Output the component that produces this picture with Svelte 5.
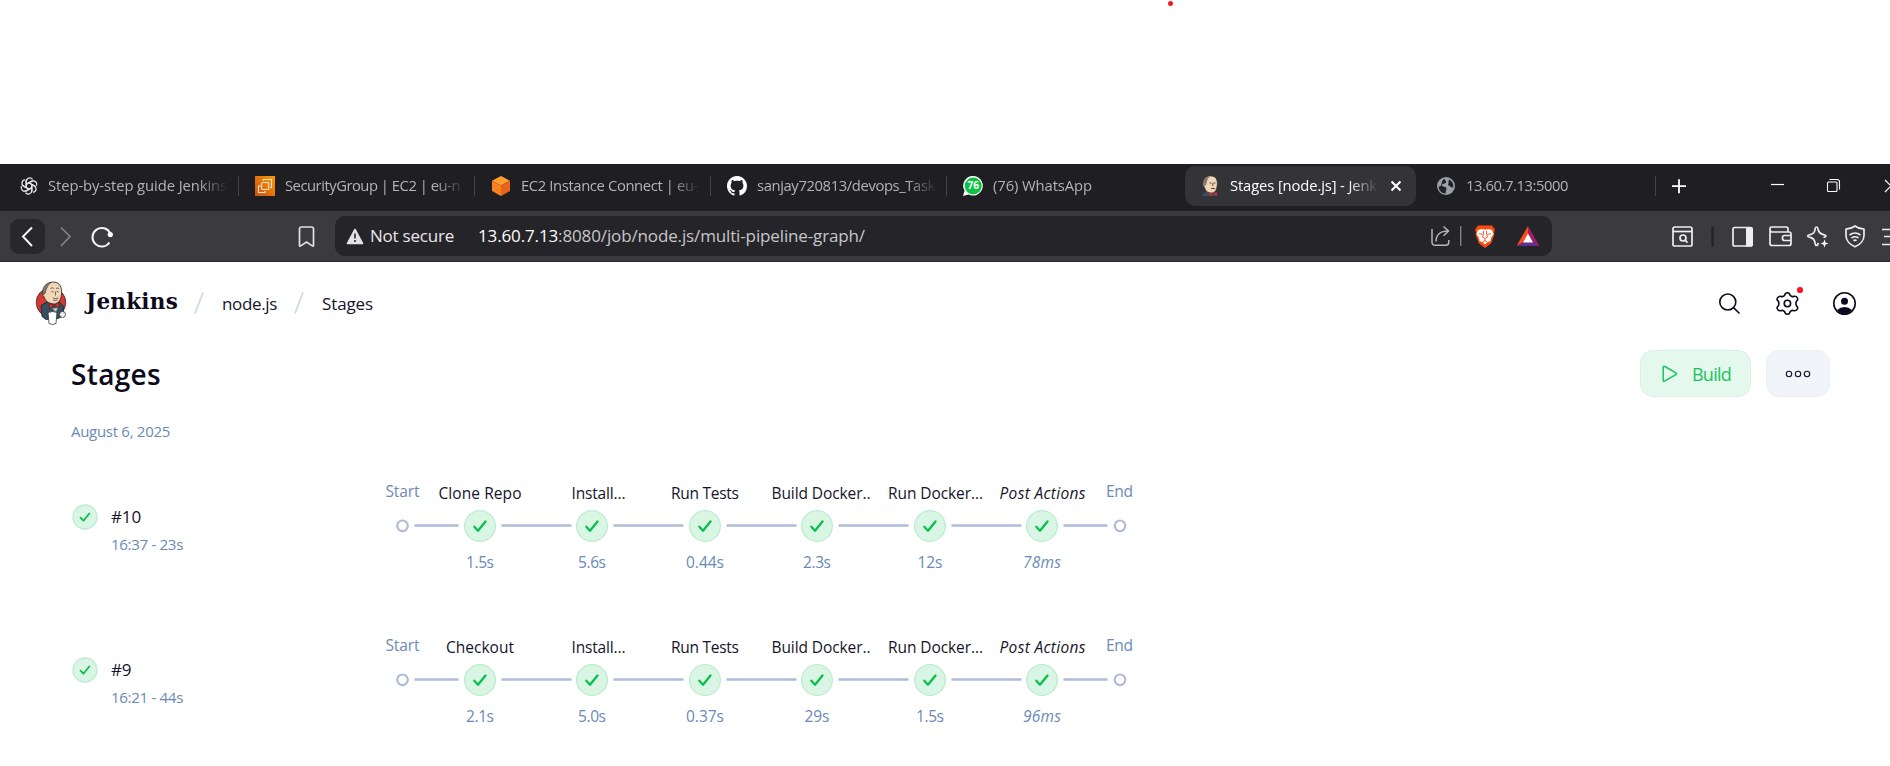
<script>
  // Spreads a label's letters so that it fills the given width.
  function fit(el, width) {
    const natural = el.getBoundingClientRect().width;
    el.style.letterSpacing = (width - natural) / el.textContent.length + 'px';
  }

  const tabs = [
    { icon: 'gpt', text: 'Step-by-step guide Jenkins', w: 179 },
    { icon: 'sg', text: 'SecurityGroup | EC2 | eu-n', w: 175 },
    { icon: 'ec2', text: 'EC2 Instance Connect | eu-', w: 177 },
    { icon: 'github', text: 'sanjay720813/devops_Task', w: 178 },
    { icon: 'wa', text: '(76) WhatsApp', w: 99 },
    { icon: 'jenkins', text: 'Stages [node.js] - Jenk', w: 147, active: true },
    { icon: 'globe', text: '13.60.7.13:5000', w: 102 }
  ];

  const xs = [480, 592, 705, 817, 930, 1042];
  const common = [
    { name: 'Install...', w: 54, cx: 598.5 },
    { name: 'Run Tests', w: 68 },
    { name: 'Build Docker..', w: 99, cx: 821 },
    { name: 'Run Docker...', w: 95, cx: 935.5 },
    { name: 'Post Actions', w: 86, cx: 1042.5, it: true }
  ];
  const runs = [
    { id: '#10', iw: 30, time: '16:37 - 23s', stages: [{ name: 'Clone Repo', w: 83 }, ...common],
      took: [['1.5s', 28], ['5.6s', 28], ['0.44s', 38], ['2.3s', 28], ['12s', 25], ['78ms', 38]] },
    { id: '#9', iw: 20, time: '16:21 - 44s', stages: [{ name: 'Checkout', w: 68 }, ...common],
      took: [['2.1s', 28], ['5.0s', 28], ['0.37s', 38], ['29s', 25], ['1.5s', 28], ['96ms', 38]] }
  ];
</script>

{#snippet butler()}
  <circle cx="15" cy="21" r="14.8" fill="#d33833" stroke="#3a1512" stroke-width=".7" />
  <path d="M5 24 10 21 23 20 27 24 28 34 22 37 10 38 6 35Z" fill="#335061" stroke="#172229" stroke-width=".8" />
  <path d="M8 10C9 2 14 .5 18 .6 24 1 26 6 25.5 12 25.3 18 23 22 18 22.5 12 22 9 19 8 15 6 15 6 10 8 10Z" fill="#f0d6b7" stroke="#352e2a" stroke-width=".9" />
  <path d="M7.500 13C5 9 8 2 15 .8 11.500 3.500 11.300 6 10 8L9 12Z" fill="#847b73" stroke="#403b38" stroke-width=".7" />
  <path d="M14.500 7q1.800-1.500 3.200 0M20 7q1.500-1 3 0M15.500 10.200h2M20.500 10.200h2M19.500 10v4M17 16.500q3 1.500 5.500 0M17 18.500q2.500 1 4.500 0" fill="none" stroke="#59483c" stroke-width=".8" />
  <path d="M13.500 22 18 24 13.500 27Z M18 24 23 21 23 26Z" fill="#d33833" stroke="#81110f" stroke-width=".7" />
  <path d="M16 27 22 26 20 31Z" fill="#c9c8cb" stroke="#555" stroke-width=".6" />
  <path d="M12 31q5-2 9 0l-1 11q-3.500 2-7 0Z" fill="#fff" stroke="#33363c" stroke-width=".8" />
  <circle cx="26.500" cy="33" r="3" fill="#efeeee" stroke="#33363c" stroke-width=".8" />
{/snippet}

{#snippet tabIcon(kind)}
  <svg class="fav" viewBox="0 0 20 20">
    {#if kind === 'gpt'}
      <g fill="none" stroke="#e6e6e6" stroke-width="1.300" stroke-linejoin="round">
        {#each [0, 60, 120, 180, 240, 300] as a}
          <path transform="rotate({a} 10 10)" d="M7.200 11.700V5.200A3.600 3.600 0 0 1 13.600 3.300M7.200 8.400 12.600 5.200A3.600 3.600 0 0 1 14.400 4.800" />
        {/each}
      </g>
    {:else if kind === 'sg'}
      <defs><linearGradient id="o" x1="0" y1="1" x2="1" y2="0"><stop stop-color="#c8511b" /><stop offset="1" stop-color="#f90" /></linearGradient></defs>
      <path fill="url(#o)" d="M0 0h20v20H0z" />
      <g fill="none" stroke="#ffe7c8" stroke-width="1.100"><rect x="6.700" y="6.500" width="7" height="7" rx="1" /><path d="M8.500 5V3.500h8v8H15M6 10H3.500v6.500H10V15" /></g>
    {:else if kind === 'ec2'}
      <path fill="#ff9d2e" d="m10 0 9 4.800-9 4.700-9-4.700z" /><path fill="#f58220" d="m1 4.800 9 4.700V20l-9-4.900z" /><path fill="#e8641b" d="m19 4.800-9 4.700V20l9-4.900z" />
    {:else if kind === 'github'}
      <path transform="scale(1.25)" fill="#fff" d="M8 0C3.58 0 0 3.58 0 8c0 3.54 2.29 6.53 5.47 7.59.4.07.55-.17.55-.38 0-.19-.01-.82-.01-1.49-2.01.37-2.53-.49-2.69-.94-.09-.23-.48-.94-.82-1.13-.28-.15-.68-.52-.01-.53.63-.01 1.08.58 1.23.82.72 1.21 1.87.87 2.33.66.07-.52.28-.87.51-1.07-1.78-.2-3.64-.89-3.64-3.95 0-.87.31-1.59.82-2.15-.08-.2-.36-1.02.08-2.12 0 0 .67-.21 2.2.82.64-.18 1.32-.27 2-.27s1.36.09 2 .27c1.53-1.04 2.2-.82 2.2-.82.44 1.1.16 1.92.08 2.12.51.56.82 1.27.82 2.15 0 3.07-1.87 3.75-3.65 3.95.29.25.54.73.54 1.48 0 1.07-.01 1.93-.01 2.2 0 .21.15.46.55.38A8.01 8.01 0 0 0 16 8c0-4.42-3.58-8-8-8z" />
    {:else if kind === 'wa'}
      <path fill="#fff" d="M10.200 0A9.800 9.800 0 1 1 5.500 18.500L0 20l1.600-5.200A9.800 9.800 0 0 1 10.200 0Z" />
      <circle cx="10.200" cy="9.900" r="8.500" fill="#0cc143" />
      <text x="10.200" y="13.400" text-anchor="middle" font-size="10" font-weight="700" fill="#fff">76</text>
    {:else if kind === 'jenkins'}
      <path d="M2 20q0-3 4-4l9-1 3 5Z" fill="#335061" />
      <path d="M4 6C4 1 8 0 11 0c5 0 6.500 4 6.300 8C17 14 15 17 11.500 17 7 17 5 14 4.500 11 2.500 10 2.500 7 4 6Z" fill="#f0d6b7" stroke="#352e2a" stroke-width=".7" />
      <path d="M4 10C2 5 4 1 10 .2 7 3 7.500 5 6 9Z" fill="#847b73" />
      <path d="M9.500 7h2M13.500 7h2M12.800 7v3M11 12.500h4" stroke="#59483c" stroke-width="1" />
      <path d="M9 16l4 2-4 2ZM13 18l4-2v4Z" fill="#e2231f" />
    {:else}
      <circle cx="10" cy="10" r="9" fill="#9aa0a6" />
      <path fill="#202124" d="M8.500 2.500c-.5 2 2.500 2 1.500 4-1.500 2-4 .5-4 3 1 2 4 .5 4.500 3 0 2-1.500 3-.5 5C5 17.500 2.700 14 2.700 10.500c2 .5 2.500-1 2.800-2.500.5-2.500 1-4.500 3-5.500ZM13 3.500c-1 1.500.5 3-1 4.500 0 2 2 1.500 3 3 .5 1 1.500.5 2.300 0C17.600 7.500 16 4.700 13 3.500Z" />
    {/if}
  </svg>
{/snippet}

{#snippet status(r, cx, cy)}
  <circle {cx} {cy} r={r - 0.6} fill="#d9f5e4" stroke="#bdedd0" stroke-width="1.3" />
  <path transform="translate({cx} {cy}) scale({r / 16})" d="m-5.700.8 3.700 3.900 7.500-9.200" fill="none" stroke="#09bf4d" stroke-width="2.300" stroke-linecap="round" stroke-linejoin="round" />
{/snippet}

<div class="page">
  <div class="blank"><i class="speck"></i></div>

  <div class="tabs">
    {#each tabs as t, i}
      <div class="tab" class:active={t.active} class:bar={i !== 4 && i !== 5}>
        {@render tabIcon(t.icon)}
        <div class="clip"><span use:fit={t.w}>{t.text}</span></div>
        {#if t.active}
          <svg class="x" viewBox="0 0 12 12"><path d="m1.500 1.500 9 9m0-9-9 9" stroke="#fff" stroke-width="2" /></svg>
        {/if}
      </div>
    {/each}
    <svg class="winctl" width="230" height="47" viewBox="1660 0 230 47" fill="none" stroke="#fff">
      <path d="M1672 22.200h14M1679 15.200v14" stroke-width="1.800" />
      <path d="M1771 20.500h13" stroke-width="1.200" />
      <rect x="1827.500" y="18" width="9.500" height="9.500" rx="1" stroke-width="1.100" />
      <path d="M1829.500 15.500h7.500q2.500 0 2.500 2.500v7.500" stroke-width="1.100" />
      <path d="m1885 16 12 12m0-12-12 12" stroke-width="1.200" />
    </svg>
  </div>

  <div class="toolbar">
    <svg class="nav" width="335" height="50" viewBox="0 0 335 50" fill="none" stroke="#f4f4f4" stroke-width="2">
      <rect x="10" y="8" width="35" height="35" rx="9" fill="#28282b" stroke="none" />
      <path d="m32 16.500-9 9 9 9.500" />
      <path d="m61 16.500 9 9-9 9.500" stroke="#85848a" stroke-width="1.700" />
      <path d="M109.500 31.500A9.300 9.300 0 1 1 110.300 22.500" /><circle cx="110.300" cy="23.600" r="2.600" fill="#fff" stroke="none" />
      <path d="M299.500 34.500V18q0-2 2-2h10q2 0 2 2v16.500q0 1.200-1.200.4L306.500 31l-5.800 3.900q-1.200.8-1.200-.4Z" stroke="#e2e1e5" stroke-width="1.700" />
    </svg>
    <div class="address">
      <svg class="warn" width="18" height="17" viewBox="0 0 18 17"><path d="M9 1.500 16.500 15.500h-15Z" fill="#e3e2e6" stroke="#e3e2e6" stroke-width="1.600" stroke-linejoin="round" /><path d="M9 5.500v5M9 12v2" stroke="#29282c" stroke-width="1.600" /></svg>
      <span class="insecure" use:fit={84}>Not secure</span>
      <span class="url" use:fit={387}><b>13.60.7.13</b>:8080/job/node.js/multi-pipeline-graph/</span>
      <svg class="shields" width="122" height="40" viewBox="1430 0 122 40" fill="none">
        <path d="M1432 13v13q0 3.300 3.300 3.300h10.500q3 0 3-3.300v-2M1436 25.500c0-7 5-10.500 12-10.500M1443.500 10.500l5 4.500-5 4.700" stroke="#b7b6ba" stroke-width="1.500" />
        <path d="M1460.700 10v20" stroke="#8a898e" stroke-width="1.300" />
        <path d="M1478 9.500h14l3 4-1 3 .5 2-3.500 9-6 4.500-6-4.500-3.500-9 .5-2-1-3Z" fill="#fb4a0b" />
        <path d="m1478 14 3.500-1 3.500.8 3.500-.8 3.500 1 1.500 4-2.500 4-.5 3-3.500 1.500-2 2-2-2-3.500-1.500-.5-3-2.500-4Z" fill="#fff" />
        <path d="m1479 17.500 3.500 1M1491 17.500l-3.500 1M1483.500 15v3l-1 3 2.500 1.500 2.500-1.500-1-3v-3M1485 23v1.500l-2.300 1.500M1485 24.500l2.300 1.500" stroke="#fb4a0b" stroke-width=".9" />
        <path d="m1528 10-11.500 20 7-4 4.500-8Z" fill="#ff4a1c" /><path d="m1528 10 11.500 20-7-4-4.500-8Z" fill="#9e1f63" /><path d="m1516.500 30 7-4h9l7 4Z" fill="#662d91" /><path d="m1528 17.500 5 9h-10Z" fill="#fff" />
      </svg>
    </div>
    <svg class="ext" width="222" height="50" viewBox="1668 0 222 50" fill="none" stroke="#eeedf0" stroke-width="1.700" stroke-linejoin="round">
      <rect x="1673" y="16" width="19" height="19" rx="1.800" /><path d="M1673 20.500h19" /><circle cx="1683" cy="27" r="3" /><path d="m1685 29 2.500 2.700" />
      <path d="M1712.500 15.500v20" stroke="#242327" stroke-width="2.300" />
      <rect x="1733" y="16.500" width="19" height="18.500" rx="1.800" /><path d="M1746 16h5q2 0 2 2v15.500q0 2-2 2h-5Z" fill="#eeedf0" stroke="none" />
      <path d="M1788 21v-3q0-2-2-2h-14.500q-1.500 0-1.500 2v14.500q0 2 2 2h17q2 0 2-2V23q0-2-2-2h-17q-2 0-2-2M1791 24.500h-6.500q-2 0-2 2v1q0 2 2 2h6.500" />
      <path d="M1816.500 16q1.200 0 1.500 2 .8 4.500 5.500 5.600 2.500.6 2.500 1.500t-2.500 1.500M1807.600 25q0-.9 2.500-1.400 4.700-1.100 5-5.600.2-2 1.400-2M1807.600 25q0 .9 2.500 1.400 4.500 1 5 6 .2 2.100 1.400 2.100t1.700-2.500" /><path d="m1824.500 28.500 1.100 2.900 2.900 1.100-2.900 1.100-1.100 2.900-1.100-2.900-2.900-1.100 2.900-1.100Z" fill="#fff" stroke="none" />
      <path d="M1855 15q4 3 9 3.200v6.300c0 5-4 9.300-9 11.200-5-1.900-9-6.200-9-11.200v-6.300q5-.2 9-3.200Z" /><path d="M1849.500 24q5.500-4 11 0M1851.500 27q3.500-2.500 7 0M1853.500 29.700q1.500-1 3 0" />
      <path d="M1882 18.500h16M1884 25.500h14M1882 33.500h16" />
    </svg>
  </div>

  <header>
    <svg class="logo" width="32" height="46" viewBox="-1 -1.500 32 46">{@render butler()}</svg>
    <span class="brand" use:fit={92}>Jenkins</span>
    <svg class="slash" width="10" height="22"><path d="M9 .5 1 21.500" stroke="#d0d9e6" stroke-width="1.800" /></svg>
    <span class="crumb c1" use:fit={55}>node.js</span>
    <svg class="slash" width="10" height="22"><path d="M9 .5 1 21.500" stroke="#d0d9e6" stroke-width="1.800" /></svg>
    <span class="crumb" use:fit={51}>Stages</span>
    <svg class="actions" width="150" height="42" viewBox="1710 282 150 42" fill="none" stroke="#0b0a1c" stroke-width="1.600">
      <circle cx="1727.800" cy="302" r="8" /><path d="m1733.500 307.700 6 5.800" />
      <path d="M1784.700 295.200Q1785.200 292.800 1787.400 292.800T1790.100 295.200Q1791.800 297.400 1794.300 296.200Q1796.500 296 1797.400 298T1796.500 301.200Q1795.300 303.500 1796.500 305.800Q1798.300 307.200 1797.400 309T1794.300 310.800Q1791.800 309.600 1790.100 311.800Q1789.600 314.200 1787.400 314.200T1784.700 311.800Q1783 309.600 1780.500 310.800Q1778.300 311 1777.400 309T1778.300 305.800Q1779.500 303.500 1778.300 301.200Q1776.500 299.800 1777.400 298T1780.500 296.200Q1783 297.400 1784.700 295.200Z" stroke-linejoin="round" /><circle cx="1787.400" cy="303.500" r="3.200" />
      <circle cx="1800" cy="290" r="3.100" fill="#fb1722" stroke="none" />
      <circle cx="1844.500" cy="303.500" r="10.700" /><circle cx="1844.500" cy="301.300" r="3.500" fill="#0b0a1c" stroke="none" /><path d="M1837 310q3.500-3 7.500-3t7.500 3q-3 4-7.500 4t-7.500-4Z" fill="#0b0a1c" stroke="none" />
    </svg>
  </header>

  <div class="title">
    <h1><span use:fit={90}>Stages</span></h1>
    <button class="build"><svg width="16" height="18" viewBox="0 0 16 18"><path d="M1.200 2.600q0-2 1.700-1.100l11 6.300q1.500.9 0 1.800l-11 6.300q-1.700.9-1.700-1.100Z" fill="none" stroke="#18c45b" stroke-width="1.500" /></svg><span use:fit={39}>Build</span></button>
    <button class="more"><svg width="26" height="8" fill="none" stroke="#14142b" stroke-width="1.100"><circle cx="4" cy="4" r="2.700" /><circle cx="13" cy="4" r="2.700" /><circle cx="22" cy="4" r="2.700" /></svg></button>
  </div>

  <div class="date"><span use:fit={99}>August 6, 2025</span></div>

  {#each runs as run}
    <div class="run">
      <svg class="state" width="26" height="26">{@render status(12.6, 13, 13)}</svg>
      <div class="meta">
        <div class="id"><span use:fit={run.iw}>{run.id}</span></div>
        <div class="time"><span use:fit={72}>{run.time}</span></div>
      </div>
      <svg class="graph" width="770" height="120" viewBox="380 466 770 120">
        <g stroke="#afbbd8" stroke-width="2.600" fill="none">
          <circle cx="402.500" cy="525.800" r="5.300" stroke-width="2.200" />
          <path d="M414.500 525.500h44M1063.500 525.500h44" />
          {#each xs.slice(0, -1) as x}<path d="M{x + 21.5} 525.500h70" />{/each}
          <circle cx="1120" cy="525.800" r="5.300" stroke-width="2.200" />
        </g>
        <text class="soft" x="385.500" y="497" textLength="34">Start</text>
        <text class="soft" x="1106" y="497" textLength="27">End</text>
        {#each run.stages as s, i}
          {@render status(16, xs[i], 526)}
          <text class:it={s.it} x={(s.cx ?? xs[i]) - s.w / 2} y="499" textLength={s.w}>{s.name}</text>
          <text class="soft" class:it={s.it} x={xs[i] - run.took[i][1] / 2} y="568" textLength={run.took[i][1]}>{run.took[i][0]}</text>
        {/each}
      </svg>
    </div>
  {/each}
</div>

<style>
  :global(body) { margin: 0; background: #fff; overflow: hidden; }
  .page { width: 1890px; height: 766px; overflow: hidden; background: #fff; font-family: 'Open Sans', 'Noto Sans', sans-serif; color: #14142b; }
  .page svg { display: block; flex: none; }
  .page span { white-space: nowrap; flex: none; display: inline-block; }
  .blank { height: 164px; display: flex; }
  .speck { width: 5px; height: 5px; border-radius: 50%; background: #f01c24; margin: 1px 0 0 1168px; }
  .tabs { height: 47px; background: #1f1e22; display: flex; align-items: flex-start; box-sizing: border-box; padding-top: 2px; }
  .tab { width: 236px; height: 40px; box-sizing: border-box; display: flex; align-items: center; padding-left: 18px; font-size: 14.800px; color: #b4b3b7; flex: none; position: relative; }
  .tab:first-child { width: 237px; padding-left: 19px; }
  .bar::after { content: ''; position: absolute; right: -2px; top: 10px; width: 1px; height: 20px; background: #434247; }
  .tab.active { width: 231px; margin: 0 2px 0 4px; padding-left: 15px; background: #343338; border-radius: 10px; color: #fff; }
  .fav { width: 20px; height: 20px; margin-right: 10px; }
  .tab:first-child .fav { margin-right: 9px; }
  .clip { width: 178px; margin-top: -2px; overflow: hidden; line-height: 24px; -webkit-mask-image: linear-gradient(90deg, #000 150px, transparent 180px); mask-image: linear-gradient(90deg, #000 150px, transparent 180px); }
  .active .clip { width: 149px; -webkit-mask-image: linear-gradient(90deg, #000 118px, transparent 148px); mask-image: linear-gradient(90deg, #000 118px, transparent 148px); }
  .x { width: 12px; height: 12px; margin-left: 11px; }
  .winctl { margin: -2px 0 0 auto; }
  .toolbar { height: 51px; box-sizing: border-box; background: #3b3a3f; border-bottom: 1px solid #29282c; display: flex; }
  .address { margin-top: 5px; width: 1217px; height: 40px; border-radius: 10px; background: #252429; display: flex; align-items: center; color: #c7c6ca; font-size: 17px; box-sizing: border-box; padding-left: 11px; }
  .insecure { margin: -2px 24px 0 6px; color: #e8e7ea; }
  .url { margin-top: -2px; }
  .url b { font-weight: 400; color: #fff; }
  .shields { margin-left: auto; }
  .ext { margin-left: auto; }
  header { height: 82px; display: flex; align-items: center; padding-left: 35px; font-size: 17px; }
  .brand { font: 700 21.500px 'DejaVu Serif', serif; color: #0b0a1c; margin: -3px 16px 0 19px; }
  .slash { margin-right: 18px; }
  .c1 { margin-right: 17px; }
  .actions { margin-left: auto; margin-right: 30px; }
  .title { height: 59px; padding: 0 60px 0 71px; display: flex; align-items: center; }
  h1 { margin: 0 auto 0 0; font-size: 28px; font-weight: 600; line-height: 40px; color: #0b0a1c; }
  button { height: 47px; box-sizing: border-box; border-radius: 13px; display: flex; align-items: center; justify-content: center; font: 18px 'Open Sans', sans-serif; padding: 0; }
  .build { width: 111px; background: #e4f8ed; border: 1px solid #d5f3e1; color: #18c45b; gap: 14px; padding-left: 2px; margin-right: 15px; }
  .more { width: 64px; background: #f1f5f9; border: 1px solid #ebeff4; }
  .date { height: 57px; box-sizing: border-box; padding: 17px 0 0 71px; font-size: 15px; line-height: 22px; color: #6a8ab8; }
  .run { height: 153px; padding-left: 72px; display: flex; box-sizing: border-box; }
  .state { margin-top: 44px; }
  .meta { width: 269px; padding: 44px 0 0 13px; }
  .id { font-size: 17px; line-height: 26px; }
  .time { font-size: 15.200px; line-height: 22px; margin-top: 3px; color: #6a8ab8; }
  .graph { margin-top: 6px; }
  .run + .run .graph { margin-top: 7px; }
  .graph text { font-size: 15.500px; fill: #14142b; }
  .graph .soft { fill: #6a8ab8; }
  .graph .it { font-style: italic; }
</style>
